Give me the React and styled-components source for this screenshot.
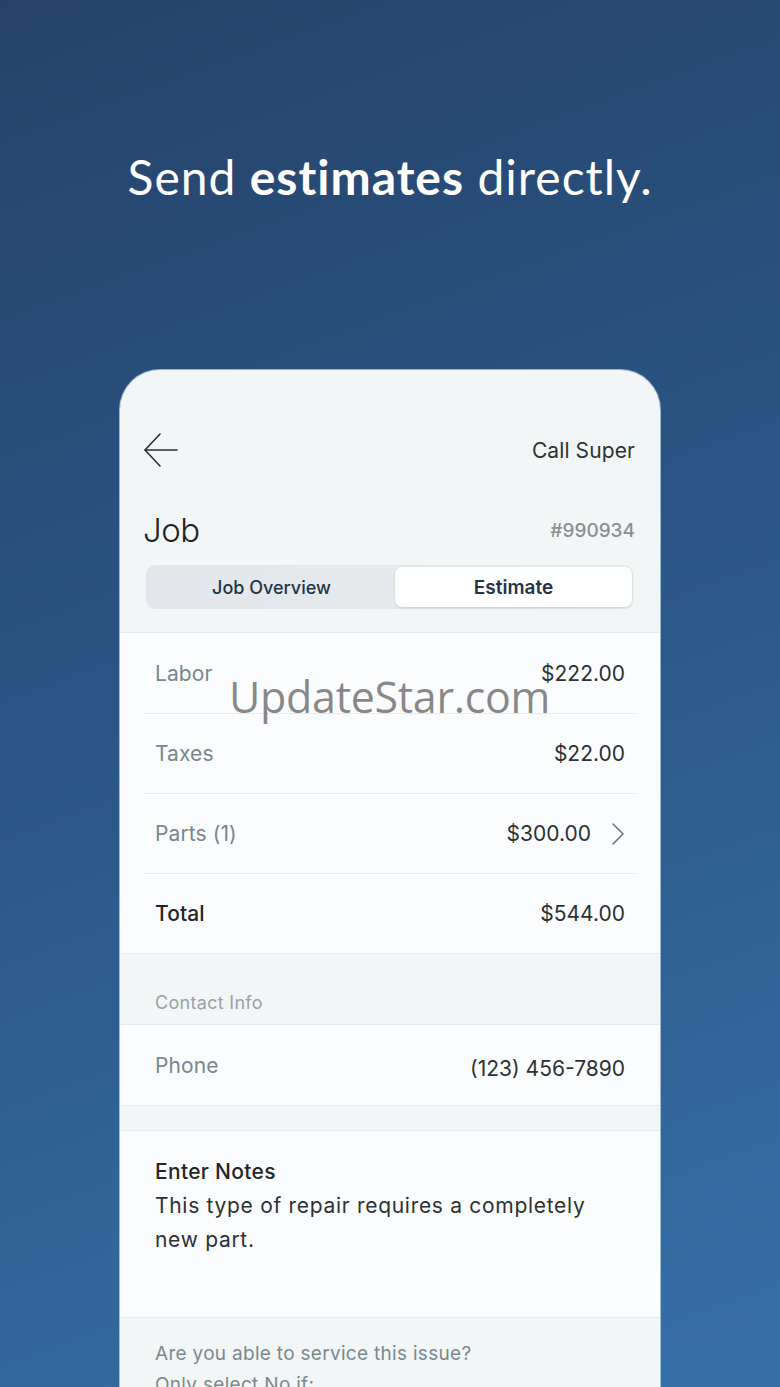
import React from "react";
import styled, { createGlobalStyle } from "styled-components";

const Global = createGlobalStyle`
  html, body { margin: 0; padding: 0; }
  body { font-family: "Inter", "Roboto", sans-serif; -webkit-font-smoothing: antialiased; }
`;

const Page = styled.div`
  position: relative;
  width: 780px;
  height: 1387px;
  overflow: hidden;
  background: linear-gradient(160deg, #25436a 0%, #2b5585 45%, #3670a6 100%);
  display: flex;
  flex-direction: column;
  align-items: center;
`;

const Headline = styled.h1`
  margin: 150px 0 0;
  height: 54px;
  line-height: 54px;
  font-family: "Lato", "Open Sans", sans-serif;
  font-weight: 400;
  font-size: 48px;
  color: #ffffff;
  letter-spacing: 1px;
  b { font-weight: 700; }
`;

const Card = styled.div`
  margin-top: 166px;
  width: 540px;
  flex: 1;
  background: #f2f6f7;
  border-radius: 40px 40px 0 0;
  box-shadow: 0 0 0 1px rgba(205, 228, 250, 0.7);
  overflow: hidden;
`;

const Header = styled.div`
  padding: 60px 25px 23px 23px;
  display: flex;
  flex-direction: column;
`;

const Bar = styled.div`
  display: flex;
  align-items: center;
  justify-content: space-between;
  height: ${(p) => p.$h}px;
  margin-top: ${(p) => p.$mt || 0}px;
`;

const BackBtn = styled.div`
  width: 36px;
  height: 36px;
  display: flex;
  align-items: center;
`;

const Action = styled.span`
  font-size: 21px;
  color: #2e3335;
  letter-spacing: 0.1px;
`;

const Title = styled.span`
  font-size: 33px;
  font-weight: 300;
  color: #1f2224;
  letter-spacing: -0.5px;
`;

const JobId = styled.span`
  font-size: 19px;
  font-weight: 500;
  color: #8c8f92;
`;

const Segment = styled.div`
  margin: 15px 2px 0 3px;
  height: 44px;
  border-radius: 9px;
  background: linear-gradient(90deg, #e3e7eb, #e8ecef);
  display: grid;
  grid-template-columns: 248fr 238fr;
  padding: 2px 1px 2px 2px;
  box-sizing: border-box;
`;

const Tab = styled.div`
  display: flex;
  align-items: center;
  justify-content: center;
  border-radius: 7px;
  font-size: ${(p) => (p.$active ? 19 : 18)}px;
  font-weight: ${(p) => (p.$active ? 600 : 500)};
  color: #22344a;
  background: ${(p) => (p.$active ? "#ffffff" : "transparent")};
  box-shadow: ${(p) => (p.$active ? "0 1px 3px rgba(0,0,0,0.12)" : "none")};
`;

const Section = styled.div`
  background: #fbfcfd;
  border-top: 1px solid #e6ebee;
  border-bottom: 1px solid #e6ebee;
`;

const Row = styled.div`
  margin: 0 24px 0 23px;
  height: 80px;
  box-sizing: border-box;
  padding: 0 11px 0 12px;
  display: flex;
  align-items: center;
  justify-content: space-between;
  border-top: ${(p) => (p.$first ? "none" : "1px solid #e7ebed")};
`;

const Label = styled.span`
  font-size: 21px;
  color: ${(p) => (p.$strong ? "#212426" : "#78878c")};
  font-weight: ${(p) => (p.$strong ? 500 : 400)};
  letter-spacing: 0.1px;
`;

const Value = styled.span`
  font-size: 21px;
  color: #2c3133;
  display: flex;
  align-items: center;
  gap: 20px;
  margin-top: ${(p) => p.$mt || 0}px;
  letter-spacing: 0px;
`;

const GroupHeader = styled.div`
  height: 70px;
  box-sizing: border-box;
  padding: 38px 35px 0;
  font-size: 18px;
  color: #9aa2a6;
  letter-spacing: 0.3px;
`;

const Gap = styled.div`
  height: 24px;
`;

const Notes = styled.div`
  background: #fbfcfd;
  border-top: 1px solid #e6ebee;
  border-bottom: 1px solid #e6ebee;
  height: 188px;
  box-sizing: border-box;
  padding: 27px 35px 0;
`;

const NotesTitle = styled.div`
  font-size: 21px;
  line-height: 28px;
  color: #232628;
  font-weight: 500;
  letter-spacing: 0.3px;
`;

const NotesBody = styled.div`
  font-size: 21px;
  line-height: 34px;
  color: #2c3133;
  margin-top: 3px;
  letter-spacing: 0.7px;
`;

const Question = styled.div`
  padding: 20px 35px 0;
  font-size: 19px;
  line-height: 31px;
  color: #7c898e;
  letter-spacing: 0.3px;
`;

const Watermark = styled.div`
  position: absolute;
  left: 229px;
  top: 669px;
  font-family: "Open Sans", "Noto Sans", sans-serif;
  font-size: 43px;
  line-height: 56px;
  color: rgba(110, 110, 110, 0.82);
  letter-spacing: -0.3px;
  pointer-events: none;
`;

const rows = [
  { label: "Labor", value: "$222.00" },
  { label: "Taxes", value: "$22.00" },
  { label: "Parts (1)", value: "$300.00", chevron: true },
  { label: "Total", value: "$544.00", strong: true },
];

export default function App() {
  return (
    <Page>
      <Global />
      <Headline>
        Send <b>estimates</b> directly.
      </Headline>
      <Card>
        <Header>
          <Bar $h={40}>
            <BackBtn>
              <svg width="36" height="36" viewBox="0 0 36 36" fill="none" stroke="#2a2e30" strokeWidth="1.6" strokeLinecap="round" strokeLinejoin="round">
                <path d="M2 18 H34" />
                <path d="M17 2 L2 18 L17 34" />
              </svg>
            </BackBtn>
            <Action>Call Super</Action>
          </Bar>
          <Bar $h={40} $mt={40}>
            <Title>Job</Title>
            <JobId>#990934</JobId>
          </Bar>
          <Segment>
            <Tab>Job Overview</Tab>
            <Tab $active>Estimate</Tab>
          </Segment>
        </Header>
        <Section>
          {rows.map((r, i) => (
            <Row key={r.label} $first={i === 0}>
              <Label $strong={r.strong}>{r.label}</Label>
              <Value>
                {r.value}
                {r.chevron && (
                  <svg width="14" height="24" viewBox="0 0 14 24" fill="none" stroke="#6f7579" strokeWidth="1.6" strokeLinecap="round" strokeLinejoin="round">
                    <path d="M2 2 L12 12 L2 22" />
                  </svg>
                )}
              </Value>
            </Row>
          ))}
        </Section>
        <GroupHeader>Contact Info</GroupHeader>
        <Section>
          <Row $first>
            <Label>Phone</Label>
            <Value $mt={6}>(123) 456-7890</Value>
          </Row>
        </Section>
        <Gap />
        <Notes>
          <NotesTitle>Enter Notes</NotesTitle>
          <NotesBody>
            This type of repair requires a completely
            <br />
            new part.
          </NotesBody>
        </Notes>
        <Question>
          Are you able to service this issue?
          <br />
          Only select No if:
        </Question>
      </Card>
      <Watermark>UpdateStar.com</Watermark>
    </Page>
  );
}
